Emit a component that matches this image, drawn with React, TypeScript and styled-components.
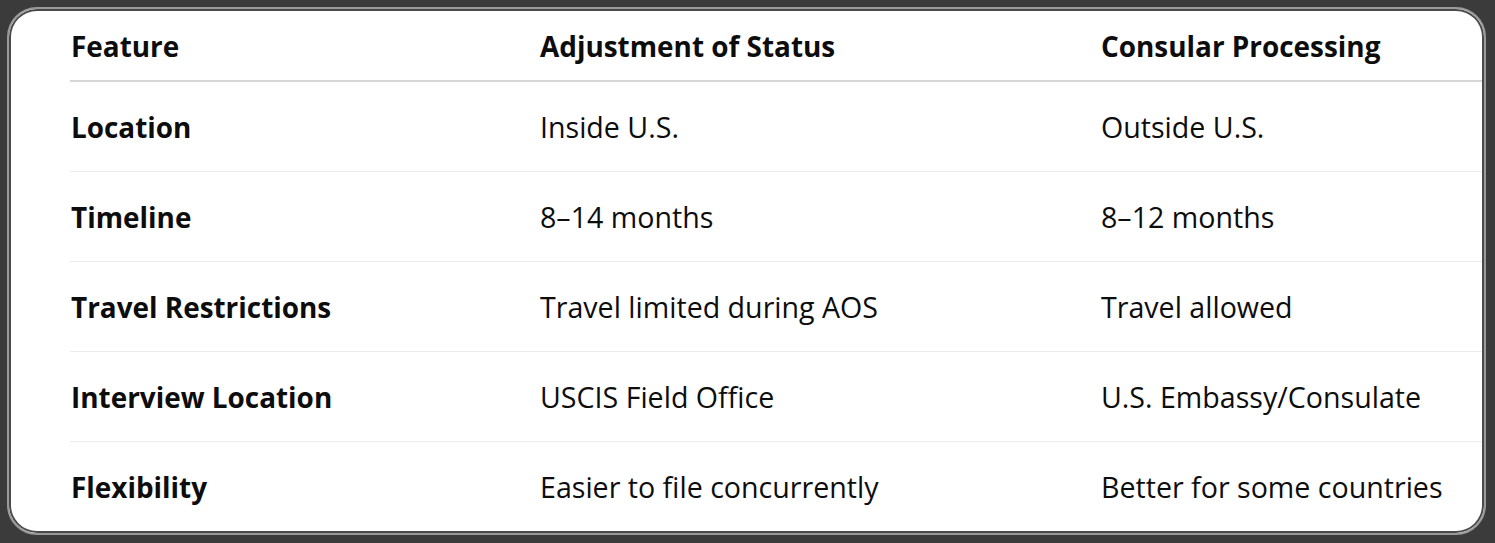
import React from "react";
import styled, { createGlobalStyle } from "styled-components";

const Global = createGlobalStyle`
  html, body { margin: 0; padding: 0; background: #3b3b3b; }
  body { font-family: "Open Sans", "Noto Sans", sans-serif; }
`;

const Frame = styled.div`
  box-sizing: border-box;
  width: 1495px;
  height: 543px;
  padding: 7px 9px 8px 7px;
  background: #3b3b3b;
`;

const Card = styled.div`
  box-sizing: border-box;
  height: 100%;
  border: 2px solid #9a9a9a;
  border-radius: 30px;
  background: #ffffff;
  box-shadow: inset 0 0 0 2px #4a4a4a;
  padding: 2px;
  overflow: hidden;
`;

const Scroller = styled.div`
  height: 100%;
  border-radius: 26px;
  overflow: hidden;
  padding-left: 59px;
`;

const Row = styled.div<{ $head?: boolean; $last?: boolean }>`
  display: grid;
  grid-template-columns: 469px 561px 1fr;
  align-items: center;
  height: ${(p) => (p.$head ? "69px" : "89px")};
  border-bottom: ${(p) =>
    p.$last ? "none" : p.$head ? "2px solid #d6d6d6" : "1px solid #ececec"};
`;

const Cell = styled.div<{ $bold?: boolean }>`
  font-size: ${(p) => (p.$bold ? "27.9px" : "28.6px")};
  color: #0d0d0d;
  font-weight: ${(p) => (p.$bold ? 700 : 400)};
  white-space: nowrap;
  padding-left: 1px;
`;

const rows = [
  ["Location", "Inside U.S.", "Outside U.S."],
  ["Timeline", "8–14 months", "8–12 months"],
  ["Travel Restrictions", "Travel limited during AOS", "Travel allowed"],
  ["Interview Location", "USCIS Field Office", "U.S. Embassy/Consulate"],
  ["Flexibility", "Easier to file concurrently", "Better for some countries"],
];

export default function App() {
  return (
    <>
      <Global />
      <Frame>
        <Card>
          <Scroller>
            <Row $head>
              <Cell $bold>Feature</Cell>
              <Cell $bold>Adjustment of Status</Cell>
              <Cell $bold>Consular Processing</Cell>
            </Row>
            {rows.map((r, i) => (
              <Row key={r[0]} $last={i === rows.length - 1}>
                <Cell $bold>{r[0]}</Cell>
                <Cell>{r[1]}</Cell>
                <Cell>{r[2]}</Cell>
              </Row>
            ))}
          </Scroller>
        </Card>
      </Frame>
    </>
  );
}
